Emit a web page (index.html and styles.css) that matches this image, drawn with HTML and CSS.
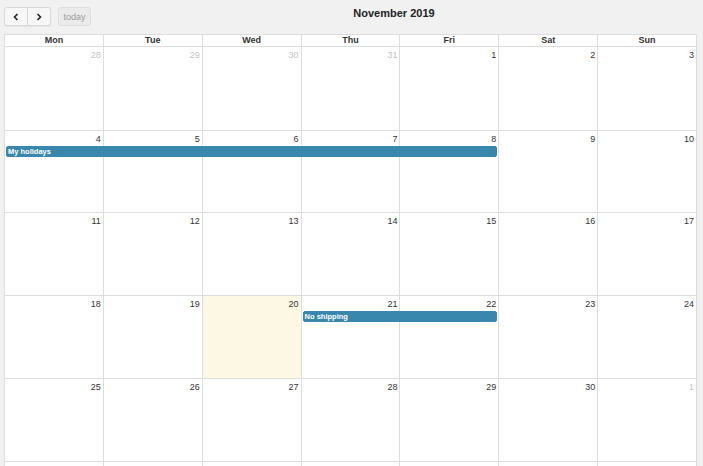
FILE: index.html
```html
<!DOCTYPE html>
<html>
<head>
<meta charset="utf-8">
<link rel="stylesheet" href="styles.css">
</head>
<body>
<div class="cal">
  <div class="toolbar">
    <div class="chunk left">
      <div class="btn-group">
        <button class="btn"><svg width="8" height="8" viewBox="0 0 8 8"><polyline points="5.5,1 2.5,4 5.5,7" fill="none" stroke="#222" stroke-width="1.6"/></svg></button>
        <button class="btn"><svg width="8" height="8" viewBox="0 0 8 8"><polyline points="2.5,1 5.5,4 2.5,7" fill="none" stroke="#222" stroke-width="1.6"/></svg></button>
      </div>
      <button class="btn today" disabled>today</button>
    </div>
    <h2 class="title">November 2019</h2>
    <div class="chunk right"></div>
  </div>
  <div class="grid">
    <div class="head">
      <div>Mon</div><div>Tue</div><div>Wed</div><div>Thu</div><div>Fri</div><div>Sat</div><div>Sun</div>
    </div>
    <div class="week first">
      <div class="bg c1"></div><div class="bg c2"></div><div class="bg c3"></div><div class="bg c4"></div><div class="bg c5"></div><div class="bg c6"></div><div class="bg c7"></div>
      <div class="num c1 other">28</div><div class="num c2 other">29</div><div class="num c3 other">30</div><div class="num c4 other">31</div><div class="num c5">1</div><div class="num c6">2</div><div class="num c7">3</div>
    </div>
    <div class="week short">
      <div class="bg c1"></div><div class="bg c2"></div><div class="bg c3"></div><div class="bg c4"></div><div class="bg c5"></div><div class="bg c6"></div><div class="bg c7"></div>
      <div class="num c1">4</div><div class="num c2">5</div><div class="num c3">6</div><div class="num c4">7</div><div class="num c5">8</div><div class="num c6">9</div><div class="num c7">10</div>
      <div class="event ev-holidays">My holidays</div>
    </div>
    <div class="week">
      <div class="bg c1"></div><div class="bg c2"></div><div class="bg c3"></div><div class="bg c4"></div><div class="bg c5"></div><div class="bg c6"></div><div class="bg c7"></div>
      <div class="num c1">11</div><div class="num c2">12</div><div class="num c3">13</div><div class="num c4">14</div><div class="num c5">15</div><div class="num c6">16</div><div class="num c7">17</div>
    </div>
    <div class="week">
      <div class="bg c1"></div><div class="bg c2"></div><div class="bg c3 is-today"></div><div class="bg c4"></div><div class="bg c5"></div><div class="bg c6"></div><div class="bg c7"></div>
      <div class="num c1">18</div><div class="num c2">19</div><div class="num c3">20</div><div class="num c4">21</div><div class="num c5">22</div><div class="num c6">23</div><div class="num c7">24</div>
      <div class="event ev-shipping">No shipping</div>
    </div>
    <div class="week">
      <div class="bg c1"></div><div class="bg c2"></div><div class="bg c3"></div><div class="bg c4"></div><div class="bg c5"></div><div class="bg c6"></div><div class="bg c7"></div>
      <div class="num c1">25</div><div class="num c2">26</div><div class="num c3">27</div><div class="num c4">28</div><div class="num c5">29</div><div class="num c6">30</div><div class="num c7 other">1</div>
    </div>
    <div class="week">
      <div class="bg c1"></div><div class="bg c2"></div><div class="bg c3"></div><div class="bg c4"></div><div class="bg c5"></div><div class="bg c6"></div><div class="bg c7"></div>
      <div class="num c1 other">2</div><div class="num c2 other">3</div><div class="num c3 other">4</div><div class="num c4 other">5</div><div class="num c5 other">6</div><div class="num c6 other">7</div><div class="num c7 other">8</div>
    </div>
  </div>
</div>
</body>
</html>
```
FILE: styles.css
```css
html, body {
  margin: 0;
  padding: 0;
  height: 466px;
  overflow: hidden;
  background: #f1f1f1;
  font-family: "Liberation Sans", Arial, sans-serif;
  color: #333;
}
.cal {
  width: 693px;
  margin-left: 4px;
}
.toolbar {
  display: flex;
  justify-content: space-between;
  align-items: flex-start;
  height: 34px;
}
.chunk.left {
  display: flex;
  gap: 7px;
  padding-top: 7px;
}
.btn-group {
  display: flex;
}
.btn {
  box-sizing: border-box;
  height: 19px;
  margin: 0;
  padding: 0 5px;
  border: 1px solid #d8d8d8;
  background: #f7f7f7;
  border-radius: 3px;
  font-family: inherit;
  font-size: 9px;
  color: #333;
  display: flex;
  align-items: center;
  justify-content: center;
  box-shadow: 0 1px 1px rgba(0,0,0,0.06);
}
.btn-group .btn {
  width: 24px;
}
.btn-group .btn:first-child {
  border-radius: 3px 0 0 3px;
}
.btn-group .btn:last-child {
  border-radius: 0 3px 3px 0;
  border-left: none;
  width: 23px;
}
.btn.today {
  width: 33px;
  background: #ebebeb;
  color: #9a9a9a;
  border-color: #dedede;
  box-shadow: none;
}
.title {
  margin: 6px 0 0;
  font-size: 11px;
  font-weight: bold;
  color: #222;
  line-height: 14px;
}
.chunk.right {
  width: 0;
}
.grid {
  background: #fff;
  border-left: 1px solid #ddd;
}
.head {
  display: grid;
  grid-template-columns: repeat(7, 1fr);
  border-top: 1px solid #ddd;
  border-bottom: 1px solid #ddd;
}
.head div {
  text-align: center;
  font-size: 9px;
  font-weight: bold;
  line-height: 11px;
  border-right: 1px solid #ddd;
}
.week {
  display: grid;
  grid-template-columns: repeat(7, 1fr);
  grid-template-rows: 15px 11px 1fr;
  height: 83px;
}
.week.first {
  height: 84px;
}
.week.short {
  height: 82px;
}
.bg {
  grid-row: 1 / 4;
  border-right: 1px solid #ddd;
  border-bottom: 1px solid #ddd;
}
.bg.is-today {
  background: #fcf8e3;
}
.c1 { grid-column: 1; }
.c2 { grid-column: 2; }
.c3 { grid-column: 3; }
.c4 { grid-column: 4; }
.c5 { grid-column: 5; }
.c6 { grid-column: 6; }
.c7 { grid-column: 7; }
.num {
  grid-row: 1;
  text-align: right;
  font-size: 9px;
  line-height: 11px;
  padding: 3px 3px 0 0;
  color: #333;
}
.num.other {
  color: #c4c4c4;
}
.event {
  grid-row: 2;
  background: #3a87ad;
  border: 1px solid #3a87ad;
  border-radius: 2px;
  color: #fff;
  font-size: 7.5px;
  font-weight: bold;
  line-height: 9px;
  padding-left: 1px;
  margin: 0 2px 0 1px;
  white-space: nowrap;
  overflow: hidden;
}
.ev-holidays {
  grid-column: 1 / 6;
}
.ev-shipping {
  grid-column: 4 / 6;
}
```
